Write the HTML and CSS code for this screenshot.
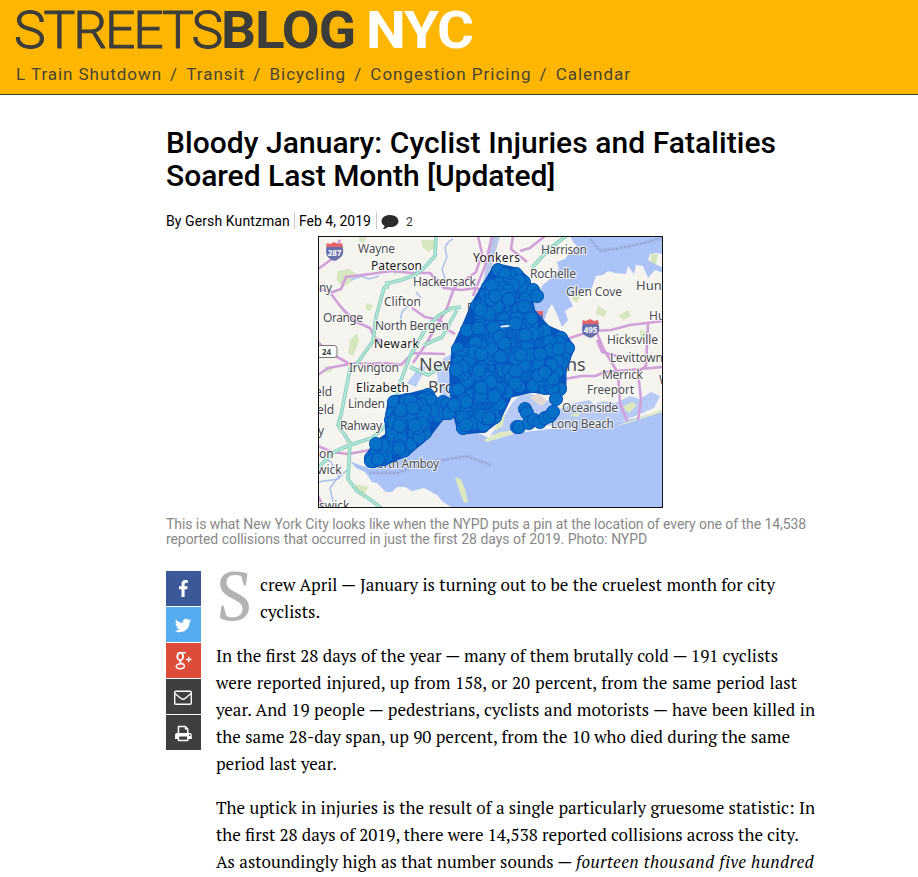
FILE: index.html
```html
<!DOCTYPE html>
<html lang="en">
<head>
<meta charset="utf-8">
<title>Bloody January: Cyclist Injuries and Fatalities Soared Last Month – Streetsblog NYC</title>
<link rel="stylesheet" href="styles.css">
</head>
<body>
<header class="site-header">
  <svg class="logo" width="480" height="60" viewBox="0 0 480 60" role="img" aria-label="Streetsblog NYC">
    <text class="logo-light" x="14" y="48" textLength="207" lengthAdjust="spacingAndGlyphs">STREETS</text>
    <text class="logo-bold" x="221" y="48" textLength="134" lengthAdjust="spacingAndGlyphs">BLOG</text>
    <text class="logo-city" x="366" y="48" textLength="107" lengthAdjust="spacingAndGlyphs">NYC</text>
  </svg>
  <nav class="site-nav"><a>L Train Shutdown</a><i>/</i><a>Transit</a><i>/</i><a>Bicycling</a><i>/</i><a>Congestion Pricing</a><i>/</i><a>Calendar</a></nav>
</header>
<main class="article">
  <h1><span class="line w610">Bloody January: Cyclist Injuries and Fatalities</span>Soared Last Month [Updated]</h1>
  <div class="meta">
    <span class="author">By Gersh Kuntzman</span><span class="date">Feb 4, 2019</span>
    <span class="comments"><svg width="18" height="15" viewBox="0 0 18 15"><path d="M9 0C4.200 0 .5 2.700.5 6.200c0 2 1.200 3.700 3.100 4.800-.3 1.300-1 2.200-2 3 2.300-.1 4.200-.9 5.500-2.100.6.1 1.300.2 1.900.2 4.800 0 8.500-2.600 8.500-5.900S13.800 0 9 0z"/></svg><b>2</b></span>
  </div>
  <figure>
    <svg class="map" width="345" height="272" viewBox="318 236 345 272">
      <rect x="318" y="236" width="345" height="272" fill="#f5f4ef"/>
      <g fill="#d6e7bf">
        <path d="M337 271l12-2 8 5-6 8-8 5-6-6zM359 236l8 1-3 6-5-2zM350 340l7-7 2 9-6 14-5-3zM421 240l12 0 5 6-9 6-6-4zM367 303l6 2-3 6-5-2zM390 268l6-4 5 8-6 3zM356 484l12 3-4 8-8-2zM651 254l7 0-2 10-6 0zM598 306l9 5-3 6-8-3zM618 316l10-6 3 6-7 4zM575 290l6 4-4 9-5-4zM382 344l8-1-3 6zM640 330l9 2-2 8-7-3zM325 366l8 2-3 5-6-2z"/>
      </g>
      <g fill="#abc3f7">
        <path d="M570 236H663V254L657 253 650 254 648 260 655 264 664 268V273L655 270 648 278 643 266 636 265 634 274 628 266 626 274 615 273 608 271 603 275 596 276 591 290 581 292 568 296 573 306 565 311 568 320 562 327 556 312 552 304 548 310 543 323 530 322 533 300 543 285 551 278 559 269 557 262 565 259 571 251 578 247 573 242Z"/>
        <path d="M350 461L362 466 375 468 400 455 424 435 440 416 448 414 470 428 490 439 515 433 550 429 600 427 663 411V508H453L443 502 437 495 424 488 412 491 405 487 397 487 392 492 386 492 377 483 372 482 365 472 356 468Z"/>
        <path d="M505 415L512 403 519 396 532 394 543 400 552 401 560 409 574 403 590 400 594 405 602 401 615 403 630 396 640 399 651 392 660 396 654 408 633 417 600 429 558 428 533 420 511 431 490 436Z" opacity=".85"/>
        <path d="M436 368l8-10 8-4v50l-9-2-4-14zM407 383l14-18 5 2-10 20zM396 410l-8-5-4 10z" opacity=".8"/>
      </g>
      <path d="M484 440L500 432 519 430 514 434 487 442ZM615 426L630 421 663 409V412L625 424Z" fill="#dfe9c4"/>
      <path d="M455 477l6 2 4 10 3 13-4 1-5-13zM499 414l6 0-2 12-8 5zM568 415l12-2-2 4zM622 407l10-5 5 3-8 8z" fill="#dde8bd"/>
      <path d="M530 397l9-4 8 8-5 5-7-4z" fill="#e3d8d3"/>
      <g fill="none" stroke="#abc0f2" stroke-width="1.500">
        <path d="M453 239q-6 3-8 9l2 9-5 12 3 10-7 8M351 280l10-4 8 3 10-3M318 455l13 7 8 14-9 12 4 19M318 482l20-3 12-12M410 304l-8 8-2 10M416 292l5 6"/>
        <path d="M590 239l10 12 20-3 24-5 20-6M369 473h28l25-9 44-8 25 9" stroke="#9bb0df" stroke-width="4" opacity=".45"/>
        <path d="M590 239l10 12 20-3 24-5 20-6M369 473h28l25-9 44-8 25 9" stroke="#8797bd" stroke-width="1" stroke-dasharray="2 2"/>
      </g>
      <path d="M492 236h8l-9 32-8 14z" fill="#b8c6ea"/>
      <g class="roads pink">
        <path d="M318 269l14-10 8-19M318 289l15 3 8-3 5-12 24-3 22-3 20 2 18 0 14 15 17 2 15-2 15 6M331 294l10 13 13 14 16 7 5 10 8 4M412 308l13 9 15 3 8 10 7 4M318 342l10 10 20 11 21 1 16-1 16 2 12-12 32 1M318 375l10-7 22-4M478 236l4 18-6 18-22 16-7 20-21 36-13 19M492 236l-7 30-12 30M513 236l-2 13 16 13M545 236l-15 12-10 3M318 446l14 6 16 2 22-4M318 496l6 12M570 338l21-7 20-1 19-5 33-4M565 379l16-3 14 0 10-4 58-5M597 333l6 15 15 25 2 30 7 18M648 324l-2 42-8 6 3 28-3 20M597 340l5 12 15 4M570 338l-4 2"/>
      </g>
      <g class="roads green-edge"><path d="M436 236l-1 20-10 11-10 8-14 5-12 3-5 5-8 29-3 24-17 24-6 4-9 46-3 10 12 18-2 36 9 12 14 9 10 8M318 468l16-16 16-7 22-7 16-14 11-38 11-30 15-26 13-14 14-8 9-1M387 281v8M566 236l-18 14-16 18M410 367l18 8 20-12M424 345l18-8 15-27"/></g>
      <g class="roads green"><path d="M436 236l-1 20-10 11-10 8-14 5-12 3-5 5-8 29-3 24-17 24-6 4-9 46-3 10 12 18-2 36 9 12 14 9 10 8M318 468l16-16 16-7 22-7 16-14 11-38 11-30 15-26 13-14 14-8 9-1M387 281v8M566 236l-18 14-16 18M410 367l18 8 20-12M424 345l18-8 15-27"/></g>
      <g class="labels dark">
        <text x="371" y="270" textLength="51">Paterson</text><text x="374" y="348" textLength="45">Newark</text><text x="356" y="392" textLength="53">Elizabeth</text><text x="473" y="262" textLength="47">Yonkers</text>
      </g>
      <g class="labels">
        <text x="358" y="253" textLength="37">Wayne</text><text x="413" y="286" textLength="63">Hackensack</text><text x="319" y="292" textLength="13">ny</text><text x="384" y="306" textLength="37">Clifton</text><text x="323" y="322" textLength="40">Orange</text><text x="375" y="330" textLength="74">North Bergen</text><text x="349" y="372" textLength="50">Irvington</text><text x="348" y="408" textLength="37">Linden</text><text x="340" y="430" textLength="42">Rahway</text><text x="315" y="396">eld</text><text x="317" y="414">eld</text><text x="318" y="435">y</text><text x="319" y="458">on</text><text x="317" y="474">wick</text><text x="319" y="510">swick</text><text x="368" y="468" textLength="71">North Amboy</text>
        <text x="541" y="254" textLength="46">Harrison</text><text x="530" y="278" textLength="46">Rochelle</text><text x="566" y="296" textLength="56">Glen Cove</text><text x="636" y="290" font-size="13">Hunt</text><text x="649" y="320">Hu</text><text x="607" y="344" textLength="51">Hicksville</text><text x="610" y="362" textLength="53">Levittown</text><text x="602" y="379" textLength="41">Merrick</text><text x="587" y="394" textLength="47">Freeport</text><text x="562" y="412" textLength="56">Oceanside</text><text x="551" y="428" textLength="63">Long Beach</text><text x="659" y="384">W</text><text class="big" x="419" y="371">New</text><text class="big bro" x="428" y="393">Bro</text><text class="big" x="566" y="371">ns</text>
        <text x="467" y="312">F</text>
      </g>
      <g class="shield">
        <path d="M327 245q8-3 15 0 3 8-1 12-3 3-7 4-5-2-7-5-2-5 0-11z" fill="#6970ae"/><path d="M327 243l3 1 4-2 4 2 4-1 1 4h-17z" fill="#e46468"/><text x="334.500" y="255.500">287</text>
        <path d="M583 323q8-3 15 0 3 8-1 11-3 3-7 4-5-2-7-4-2-5 0-11z" fill="#6970ae"/><path d="M583 320l3 1 4-2 4 2 4-1 1 4h-17z" fill="#e46468"/><text x="590.500" y="332.500">495</text>
        <path d="M534 312h9v10h-9z" fill="#6970ae"/><path d="M534 311h9v4h-9z" fill="#e46468"/>
      </g>
      <rect x="317" y="345.500" width="20" height="12" rx="3" fill="#fff" stroke="#777"/><text class="route" x="322" y="355">24</text>
      <g id="pins"></g>
      <path d="M500 326l6-1 5 .5-3 1.500-7 .5z" fill="#eef0f2"/>
      <rect x="318.500" y="236.500" width="344" height="271" fill="none" stroke="#111"/>
    </svg>
    <figcaption><span class="line w640">This is what New York City looks like when the NYPD puts a pin at the location of every one of the 14,538</span><span class="line w481">reported collisions that occurred in just the first 28 days of 2019. Photo: NYPD</span></figcaption>
  </figure>
  <div class="story">
    <aside class="share">
      <a class="fb"><svg viewBox="0 0 35 35"><path d="M21.700 9.200v2.700h-1.600c-1.300 0-1.500.6-1.500 1.500v1.900h3l-.4 3h-2.600V26h-3.100v-7.700H13v-3h2.500v-2.200c0-2.600 1.600-4 3.900-4 1.100 0 2 .1 2.300.1z"/></svg></a>
      <a class="tw"><svg viewBox="0 0 35 35"><path d="M25.200 13.600c-.4.600-1 1.200-1.600 1.600v.4c0 4.500-3.400 9.600-9.600 9.600-1.900 0-3.700-.5-5.200-1.500 1.800.2 3.500-.3 5-1.400-1.500 0-2.700-1-3.100-2.300.5.100 1 .1 1.500-.1-1.600-.3-2.700-1.700-2.700-3.300.5.200 1 .4 1.500.4-1.500-1-1.900-3-1-4.500 1.700 2.100 4.200 3.400 6.900 3.500-.5-2.200 1.100-4.200 3.300-4.200 1 0 1.800.4 2.500 1.100.8-.2 1.500-.4 2.100-.8-.2.800-.8 1.400-1.500 1.900.7-.1 1.300-.3 1.900-.4z"/></svg></a>
      <a class="gp"><svg viewBox="0 0 35 35" fill="none" stroke="#fff"><ellipse cx="14.200" cy="13.400" rx="2.900" ry="3.700" stroke-width="1.900"/><path d="M19.800 9.700h-5M16 16.800c-3 1.200-3 2.100-.9 3.200 2.400 1.100 3.900 1.900 3.300 3.800-.8 2.600-8.300 2.700-8.200-.2.100-2 2.400-2.900 5.300-2.900" stroke-width="1.400"/><path d="M22.800 13.700v5.600M20 16.500h5.600" stroke-width="1.300"/></svg></a>
      <a class="dark"><svg viewBox="0 0 35 35" fill="none" stroke="#fff" stroke-width="1.400"><rect x="8.700" y="12.200" width="16.600" height="13.100" rx="1.300"/><path d="M9 14.500c3 2.300 5 4.300 6.700 5.300q1.300.8 2.600 0c1.700-1 3.700-3 6.700-5.300"/></svg></a>
      <a class="dark"><svg viewBox="0 0 35 35"><path fill-rule="evenodd" d="M11.700 18v-6.300q0-1 1-1h6.800l3 3V18h1.200q2.100 0 2.100 2v4h-3.300v1.300q0 1-1 1h-8.800q-1 0-1-1V24H9v-4q0-2 2-2zM13.200 18h7.800v-3.600h-2.200V12.200h-5.600zM13.200 21.500v3.300h7.800v-3.300zM23 19.500v1.400h1.400v-1.400z"/></svg></a>
    </aside>
    <div class="copy">
      <div class="lead"><span class="drop">S</span><p><span class="line w515">crew April — January is turning out to be the cruelest month for city</span><span class="line w59">cyclists.</span></p></div>
      <p><span class="line w562">In the first 28 days of the year — many of them brutally cold — 191 cyclists</span><span class="line w581">were reported injured, up from 158, or 20 percent, from the same period last</span><span class="line w599">year. And 19 people — pedestrians, cyclists and motorists — have been killed in</span><span class="line w574">the same 28-day span, up 90 percent, from the 10 who died during the same</span><span class="line w121">period last year.</span></p>
      <p><span class="line w599">The uptick in injuries is the result of a single particularly gruesome statistic: In</span><span class="line w582">the first 28 days of 2019, there were 14,538 reported collisions across the city.</span><span class="line w598">As astoundingly high as that number sounds — <em>fourteen thousand five hundred</em></span></p>
    </div>
  </div>
</main>
<script src="map.js"></script>
</body>
</html>
```
FILE: styles.css
```css
* { box-sizing: border-box; }
html { overflow: hidden; }
body { margin: 0; height: 877px; overflow: hidden; background: #fff; color: #000; font-family: Roboto, "Liberation Sans", sans-serif; }
.site-header { height: 95px; background: #ffb600; border-bottom: 1px solid #3c3c3b; }
.logo { display: block; }
.logo text { font-family: Roboto, "Liberation Sans", sans-serif; font-size: 51px; fill: #3c3c3b; }
.logo .logo-light { font-weight: 300; letter-spacing: -2px; stroke: #3c3c3b; stroke-width: 1px; }
.logo .logo-bold { font-weight: 700; letter-spacing: -1px; }
.logo .logo-city { font-weight: 700; letter-spacing: -1px; fill: #fff; }
.site-nav { display: flex; padding-left: 16px; margin-top: 4px; font-size: 17px; line-height: 20px; letter-spacing: 1px; color: #474536; white-space: nowrap; }
.site-nav i { font-style: normal; margin: 0 8.2px 0 8px; }
.site-nav a:first-child { letter-spacing: .95px; }
.article { width: 650px; margin-left: 166px; padding-top: 31px; }
h1 { margin: 0; font-size: 30px; line-height: 33px; font-weight: 500; letter-spacing: -.02px; white-space: nowrap; }
h1 .line { letter-spacing: .04px; }
.meta { display: flex; height: 18px; margin-top: 20px; font-size: 14px; line-height: 18px; white-space: nowrap; }
.author, .date { height: 17px; padding-right: 4px; border-right: 1px solid #ccc; }
.author { width: 129px; letter-spacing: .1px; }
.date { width: 82px; padding-left: 4px; }
.comments { display: flex; align-items: center; height: 20px; padding-left: 4px; }
.comments svg { fill: #2b2b2b; }
.comments b { margin-left: 7px; font-size: 12px; font-weight: 400; color: #333; }
figure { margin: 6px 0 0; }
.map { display: block; margin-left: 152px; }
.roads { fill: none; stroke-linejoin: round; }
.pink { stroke: #d19fda; stroke-width: 2.6; }
.green-edge { stroke: #85c7b3; stroke-width: 3.6; }
.green { stroke: #aee8d8; stroke-width: 2; }
.labels { font: 12px "Noto Sans", sans-serif; fill: #4b4b50; stroke: #fff; stroke-width: 2px; stroke-opacity: .75; paint-order: stroke; }
.labels.dark { fill: #171717; }
.big { font-size: 18px; }
.bro { font-size: 16px; }
.shield text { font: bold 8px "Noto Sans", sans-serif; fill: #fff; text-anchor: middle; }
.route { font: bold 8px "Noto Sans", sans-serif; fill: #444; }
#pins { fill: #066fc6; stroke: #064fba; stroke-width: .9; }
#pins polygon { fill: #0664c1; stroke: #0655bc; stroke-width: 13; stroke-linejoin: round; }
figcaption { margin-top: 9px; font-size: 14px; line-height: 15px; letter-spacing: -.09px; color: #888; }
.story { display: flex; gap: 15px; margin-top: 24px; }
.share { display: flex; flex-direction: column; gap: 1px; width: 35px; }
.share a, .share svg { display: block; width: 35px; height: 35px; }
.share svg:not([fill]) { fill: #fff; }
.fb { background: #3b5998; }
.tw { background: #55acee; }
.gp { background: #dd4b39; }
.share .dark { background: #3f3f3f; }
.copy { width: 600px; font: 17px/27px "PT Serif", "Liberation Serif", serif; }
.copy p { margin: 0 0 17px; }
.copy em { letter-spacing: .38px; }
.lead { display: flex; }
.drop { width: 44px; height: 54px; font-size: 68px; line-height: 46px; color: #b3b3b3; }
.line { display: block; white-space: nowrap; text-align: justify; text-align-last: justify; }
.w610 { width: 610px; }
.w640 { width: 640px; }
.w481 { width: 481px; }
.w515 { width: 515px; }
.w59 { width: 59px; }
.w562 { width: 562px; }
.w581 { width: 581px; }
.w599 { width: 599px; }
.w574 { width: 574px; }
.w121 { width: 121px; }
.w582 { width: 582px; }
.w598 { width: 598px; }
```
FILE: map.js
```js
// Collision pins, clustered inside simplified borough outlines.
const areas = [
  { count: 190, box: [446, 268, 574, 432], shape: [[498,270],[516,274],[524,282],[526,297],[529,313],[545,331],[561,338],[568,348],[564,358],[560,370],[560,389],[545,388],[533,386],[507,392],[495,417],[483,426],[463,428],[459,412],[456,390],[456,370],[458,349],[467,330],[477,306],[488,287]] },
  { count: 60, box: [364, 390, 443, 467], shape: [[394,402],[408,400],[428,395],[434,404],[438,416],[425,433],[405,450],[384,459],[374,461],[371,458],[379,446],[392,437],[391,420]] }
];
const group = document.getElementById("pins");
const svgNode = name => document.createElementNS("http://www.w3.org/2000/svg", name);
let seed = 2019;
const rand = () => (seed = (seed * 16807) % 2147483647) / 2147483647;
function inside(x, y, pts) {
  let hit = false;
  for (let i = 0, j = pts.length - 1; i < pts.length; j = i++) {
    const [ax, ay] = pts[i], [bx, by] = pts[j];
    if ((ay > y) !== (by > y) && x < (bx - ax) * (y - ay) / (by - ay) + ax) hit = !hit;
  }
  return hit;
}
function pin(x, y) {
  const c = svgNode("circle");
  c.setAttribute("cx", x.toFixed(1));
  c.setAttribute("cy", y.toFixed(1));
  c.setAttribute("r", 6.6);
  group.appendChild(c);
}
for (const { count, box, shape } of areas) {
  const base = svgNode("polygon");
  base.setAttribute("points", shape.join(" "));
  group.appendChild(base);
  shape.forEach(p => pin(p[0], p[1]));
  for (let n = 0; n < count;) {
    const x = box[0] + rand() * (box[2] - box[0]);
    const y = box[1] + rand() * (box[3] - box[1]);
    if (inside(x, y, shape)) { pin(x, y); n++; }
  }
}
// Outliers along the Rockaways, the Bronx shore and the Narrows.
[[533,290],[537,296],[556,399],[525,409],[527,413],[517,427],[519,427],[529,423],[534,420],[540,422],[545,418],[550,416],[553,412],[376,444],[443,402],[445,413],[447,404],[450,409],[449,413],[454,405],[371,461],[378,459]].forEach(p => pin(p[0], p[1]));
```
